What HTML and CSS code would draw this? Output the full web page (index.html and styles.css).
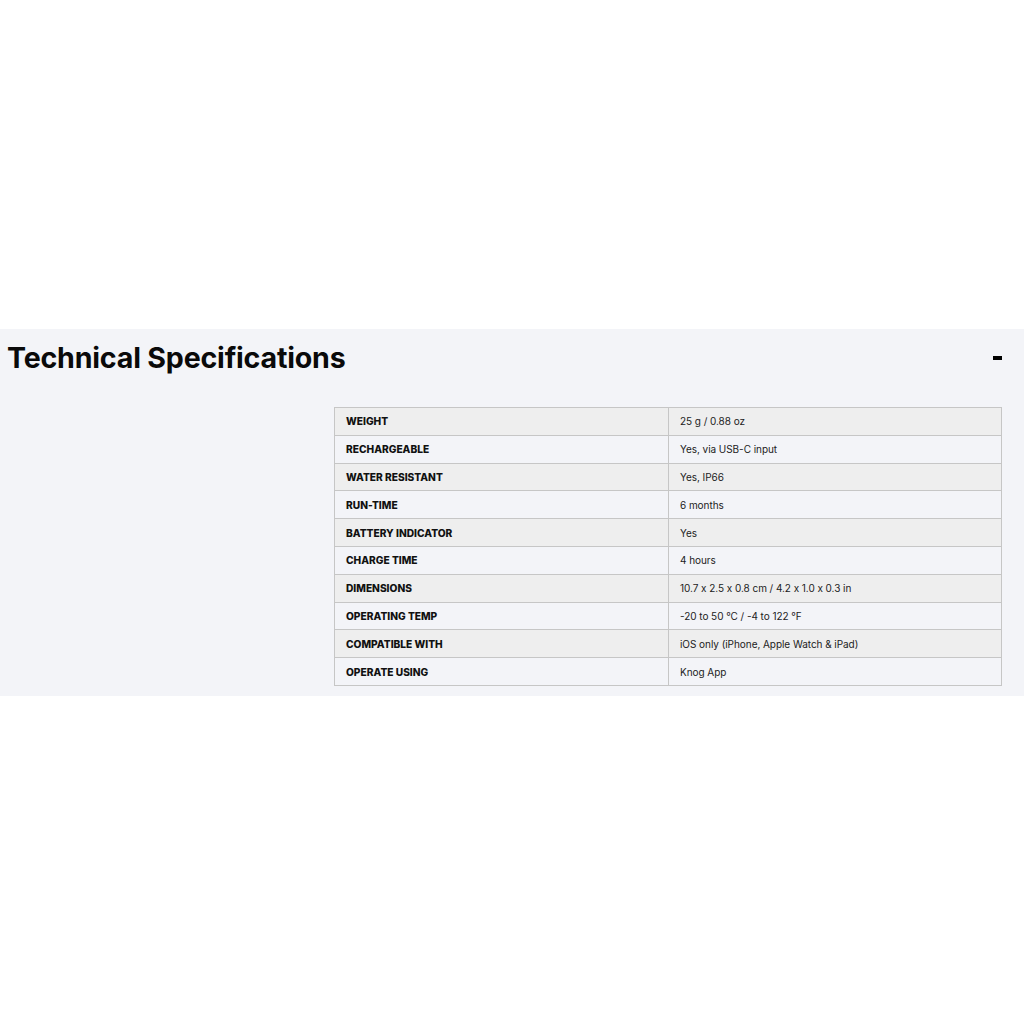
FILE: index.html
```html
<!DOCTYPE html>
<html>
<head>
<meta charset="utf-8">
<link rel="stylesheet" href="styles.css">
</head>
<body>
<div class="page">
  <section class="specs">
    <div class="head">
      <h2 class="title">Technical Specifications</h2>
      <span class="toggle"></span>
    </div>
    <div class="body">
      <table class="table">
        <tr class="odd"><th>WEIGHT</th><td>25 g / 0.88 oz</td></tr>
        <tr><th>RECHARGEABLE</th><td>Yes, via USB-C input</td></tr>
        <tr class="odd"><th>WATER RESISTANT</th><td>Yes, IP66</td></tr>
        <tr><th>RUN-TIME</th><td>6 months</td></tr>
        <tr class="odd"><th>BATTERY INDICATOR</th><td>Yes</td></tr>
        <tr><th>CHARGE TIME</th><td>4 hours</td></tr>
        <tr class="odd"><th>DIMENSIONS</th><td>10.7 x 2.5 x 0.8 cm / 4.2 x 1.0 x 0.3 in</td></tr>
        <tr><th>OPERATING TEMP</th><td>-20 to 50 °C / -4 to 122 °F</td></tr>
        <tr class="odd"><th>COMPATIBLE WITH</th><td>iOS only (iPhone, Apple Watch &amp; iPad)</td></tr>
        <tr><th>OPERATE USING</th><td>Knog App</td></tr>
      </table>
    </div>
  </section>
</div>
</body>
</html>
```
FILE: styles.css
```css
html, body { margin: 0; padding: 0; background: #ffffff; }
body { font-family: Inter, "Noto Sans", sans-serif; color: #111; font-feature-settings: "calt" 0; }
.page { padding-top: 329px; }
.specs { background: #f3f4f8; height: 367px; box-sizing: border-box; }
.head { display: flex; align-items: center; justify-content: space-between; padding: 5px 22px 0 7px; height: 46px; }
.title { margin: 0; font-size: 28.6px; font-weight: 700; letter-spacing: -0.2px; color: #0a0a0a; }
.toggle { display: block; width: 9px; height: 4px; background: #000; margin-top: 2px; }
.body { display: flex; padding: 27px 22px 0 334px; }
.table { width: 668px; border-collapse: collapse; }
.table tr { height: 27.8px; background: #f3f4f8; }
.table tr.odd { background: #eeeeee; }
.table th, .table td { border: 1px solid #c6c6c6; padding: 0 11px; text-align: left; vertical-align: middle; }
.table th { width: 311px; font-size: 10.2px; font-weight: 800; color: #111; letter-spacing: 0; }
.table td { font-size: 10px; font-weight: 400; color: #222; letter-spacing: -0.05px; font-feature-settings: "calt" 0; }
```
